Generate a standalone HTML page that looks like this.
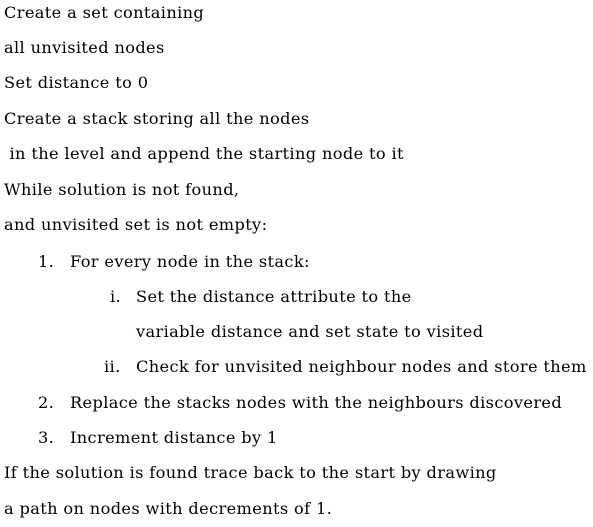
<!DOCTYPE html>
<html><head><style>
body{margin:0;width:593px;height:527px;background:#fff;position:relative;overflow:hidden;font-family:"DejaVu Serif",serif;font-size:16.2px;letter-spacing:0.36px;color:#000}
div{position:absolute;line-height:20px;white-space:pre}
</style></head><body>
<div style="left:4px;top:3px">Create a set containing</div>
<div style="left:4px;top:38px">all unvisited nodes</div>
<div style="left:4px;top:73px">Set distance to 0</div>
<div style="left:4px;top:109px">Create a stack storing all the nodes</div>
<div style="left:4px;top:144px"> in the level and append the starting node to it</div>
<div style="left:4px;top:180px">While solution is not found,</div>
<div style="left:4px;top:215px">and unvisited set is not empty:</div>
<div style="left:38px;top:252px">1.</div><div style="left:70px;top:252px">For every node in the stack:</div>
<div style="left:110px;top:287px">i.</div><div style="left:136px;top:287px">Set the distance attribute to the</div>
<div style="left:136px;top:322px">variable distance and set state to visited</div>
<div style="left:104px;top:357px">ii.</div><div style="left:136px;top:357px">Check for unvisited neighbour nodes and store them</div>
<div style="left:38px;top:393px">2.</div><div style="left:70px;top:393px">Replace the stacks nodes with the neighbours discovered</div>
<div style="left:38px;top:428px">3.</div><div style="left:70px;top:428px">Increment distance by 1</div>
<div style="left:4px;top:463px">If the solution is found trace back to the start by drawing</div>
<div style="left:4px;top:499px">a path on nodes with decrements of 1.</div>
</body></html>
